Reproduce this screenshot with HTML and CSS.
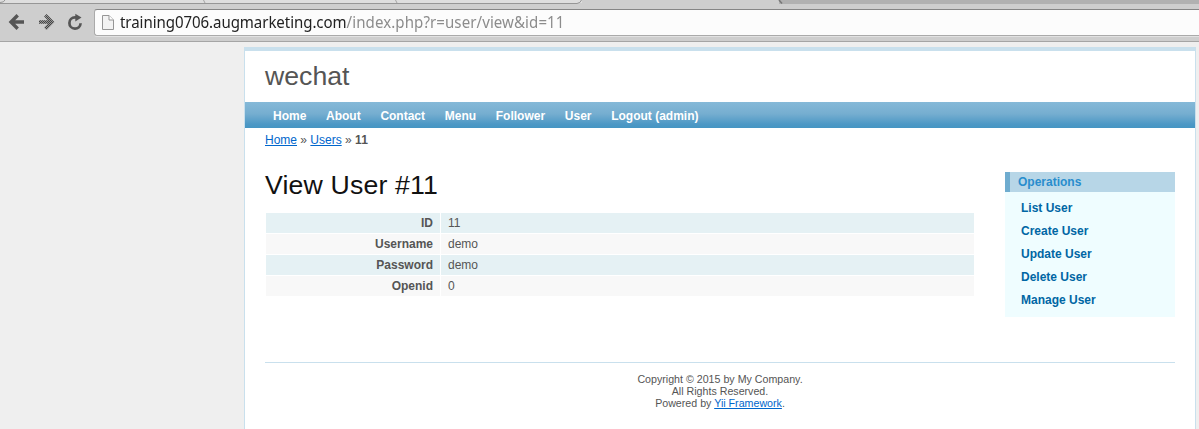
FILE: index.html
```html
<!DOCTYPE html>
<html lang="en">
<head>
<meta charset="utf-8">
<title>wechat - View User</title>
<link rel="stylesheet" href="styles.css">
</head>
<body>
<div class="browser">
  <div class="tabs">
    <svg width="1199" height="4" viewBox="0 0 1199 4">
      <rect width="582" height="3" fill="#dedede"/>
      <rect x="582" width="197" height="4" fill="#cecece"/>
      <rect x="779" width="420" height="4" fill="#b1b1b1"/>
      <path d="M0 3.5H577Q580.5 3 581.500 0M0 2.500Q4 2.500 5 0" fill="none" stroke="#969696"/>
      <path d="M203.500 0L205 3M395.500 0L397 3" fill="none" stroke="#a5a5a5"/>
      <path d="M779 0L782 3.500" fill="none" stroke="#777" stroke-width="1.500"/>
    </svg>
  </div>
  <div class="toolbar">
    <svg class="controls" width="94" height="37" viewBox="0 4 94 37">
      <g fill="none" stroke="#555" stroke-width="3.400">
        <path d="M17.700 15.200L11 22L17.700 28.800M11.500 22H24"/>
      </g>
      <g fill="none" stroke="#444" stroke-width="3.400" mask="url(#checker)">
        <path d="M45.300 15.200L52 22L45.300 28.800M51.500 22H39"/>
      </g>
      <defs>
        <pattern id="dither" width="2" height="2" patternUnits="userSpaceOnUse">
          <rect width="2" height="2" fill="#666"/>
          <rect width="1" height="1" fill="#fff"/>
          <rect x="1" y="1" width="1" height="1" fill="#fff"/>
        </pattern>
        <mask id="checker" maskUnits="userSpaceOnUse" x="36" y="10" width="22" height="24">
          <rect x="36" y="10" width="22" height="24" fill="url(#dither)"/>
        </mask>
      </defs>
      <path d="M76 17.400H75A5.600 5.600 0 1 0 80.600 23.300" fill="none" stroke="#555" stroke-width="2.700"/>
      <path d="M75.300 13.700L81.500 17.500L75.300 21.500Z" fill="#555"/>
    </svg>
    <div class="address">
      <svg class="page-icon" width="14" height="17" viewBox="0 0 14 17">
        <path d="M1.500 1.500H8L12.500 6V15.500H1.500Z" fill="#f3f3f3" stroke="#969696"/>
        <path d="M8 1.500V6H12.500" fill="#fff" stroke="#969696"/>
      </svg>
      <span class="url"><span class="host">training0706.augmarketing.com</span>/index.php?r=user/view&amp;id=11</span>
    </div>
  </div>
</div>
<div class="page">
  <header class="logo">wechat</header>
  <nav class="mainmenu">
    <a>Home</a><a>About</a><a>Contact</a><a>Menu</a><a>Follower</a><a>User</a><a>Logout (admin)</a>
  </nav>
  <div class="breadcrumbs"><a class="link">Home</a> » <a class="link">Users</a> » <b>11</b></div>
  <div class="columns">
    <main class="content">
      <h1>View User #11</h1>
      <div class="detail">
        <div class="row odd"><b>ID</b><span>11</span></div>
        <div class="row even"><b>Username</b><span>demo</span></div>
        <div class="row odd"><b>Password</b><span>demo</span></div>
        <div class="row even"><b>Openid</b><span>0</span></div>
      </div>
    </main>
    <aside class="sidebar">
      <div class="portlet-title">Operations</div>
      <ul class="operations">
        <li>List User</li>
        <li>Create User</li>
        <li>Update User</li>
        <li>Delete User</li>
        <li>Manage User</li>
      </ul>
    </aside>
  </div>
  <footer class="footer">
    Copyright © 2015 by My Company.<br>
    All Rights Reserved.<br>
    Powered by <a class="link">Yii Framework</a>.
  </footer>
</div>
</body>
</html>
```
FILE: styles.css
```css
* { box-sizing: border-box; }

body {
  margin: 0;
  height: 429px;
  overflow: hidden;
  background: #efefef;
  color: #555;
  font: 13.333px "Liberation Sans", Arial, sans-serif;
}

.browser {
  height: 42px;
  background: #cecece;
  border-bottom: 1px solid #a5a5a5;
}
.tabs { height: 4px; }
.tabs svg, .controls { display: block; }
.toolbar { display: flex; height: 37px; }
.address {
  display: flex;
  align-items: center;
  flex: 1;
  height: 27px;
  margin-top: 5px;
  padding-left: 6px;
  background: #fcfcfc;
  border: 1px solid #aaa;
  border-top-color: #858585;
  border-right: 0;
  border-radius: 3px 0 0 3px;
  box-shadow: 0 1px #e2e2e2;
}
.url {
  margin: 0 0 2px 5px;
  color: #8c8c8c;
  font: 17px/23px "Noto Sans", sans-serif;
  letter-spacing: .08px;
  white-space: nowrap;
  transform: scaleX(.886);
  transform-origin: left center;
}
.host { color: #222; letter-spacing: -.08px; }

.page {
  width: 952px;
  height: 400px;
  margin: 5px 0 0 244px;
  background: #fff;
  border: 1px solid #c9e0ed;
  border-top-width: 4px;
}
.logo {
  height: 51px;
  padding: 10px 20px 0;
  font-size: 26.667px;
  line-height: 30px;
}
.mainmenu {
  display: flex;
  gap: 19.700px;
  height: 26px;
  padding-left: 28px;
  background: linear-gradient(#85b9d8, #76aed0 45%, #4d98c5 85%, #4595c3);
  color: #fff;
  font-size: 12px;
  font-weight: bold;
  line-height: 28px;
}
.breadcrumbs {
  height: 44px;
  padding: 4px 20px 0;
  font-size: 12px;
  line-height: 16px;
}
.breadcrumbs b { letter-spacing: .3px; }
.link { color: #06c; text-decoration: underline; }

.columns {
  display: flex;
  justify-content: space-between;
  height: 190px;
  padding: 0 20px;
}
.content { width: 710px; }
h1 {
  height: 41px;
  margin: 0;
  color: #111;
  font-size: 26.667px;
  font-weight: normal;
  letter-spacing: .17px;
  line-height: 27px;
}
.detail {
  display: grid;
  gap: 1px;
  padding: 0 1px;
  font-size: 12px;
  line-height: 20px;
}
.row {
  display: grid;
  grid-template-columns: 174px 1fr;
  column-gap: 1px;
}
.row b { padding-right: 7px; text-align: right; }
.row span { padding-left: 7px; }
.odd > * { background: #e5f1f4; }
.even > * { background: #f8f8f8; }

.sidebar {
  width: 170px;
  height: 145px;
  background: #effdff;
  font-size: 12px;
  font-weight: bold;
}
.portlet-title {
  height: 20px;
  padding-left: 8px;
  background: #b7d6e7;
  border-left: 5px solid #6faccf;
  color: #298dcd;
  line-height: 20px;
}
.operations {
  margin: 0;
  padding: 5px 16px;
  color: #0066a4;
  line-height: 23px;
  list-style: none;
}

.footer {
  margin: 0 20px;
  padding-top: 10px;
  border-top: 1px solid #c9e0ed;
  font-size: 10.667px;
  line-height: 12px;
  text-align: center;
}
```
